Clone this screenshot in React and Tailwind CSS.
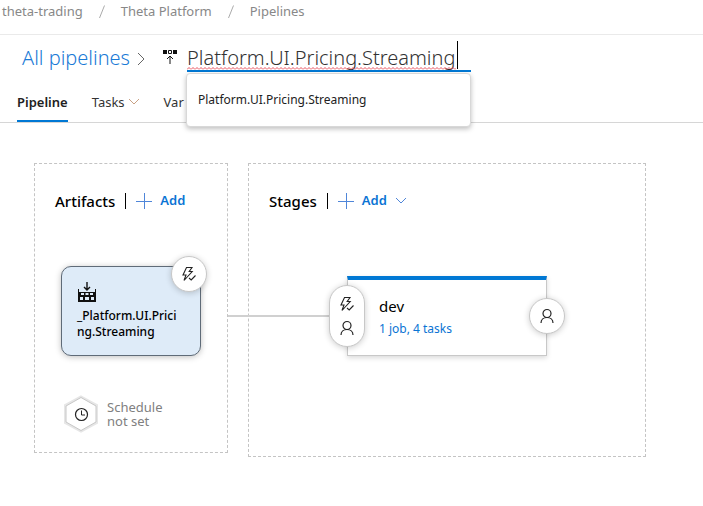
import React from "react";

function PlusIcon() {
  return (
    <svg className="h-4 w-4 shrink-0" viewBox="0 0 16 16" fill="none" stroke="#4f86d9" aria-hidden="true">
      <path d="M8.5 0v16M0 8.5h16" />
    </svg>
  );
}

function ChevronDown({ className }) {
  return (
    <svg className={className} viewBox="0 0 12 8" fill="none" stroke="currentColor" aria-hidden="true">
      <path d="M1 1l5 5 5-5" />
    </svg>
  );
}

function Slash() {
  return (
    <svg className="mx-4 mt-1 h-[14px] w-[6px] shrink-0" viewBox="0 0 6 14" fill="none" stroke="#aaa" aria-hidden="true">
      <path d="M5.500 0.500L0.500 13" />
    </svg>
  );
}

function BoltIcon() {
  return (
    <svg className="h-4 w-4 shrink-0" viewBox="0 0 16 16" fill="none" stroke="#222" strokeWidth="1.1" aria-hidden="true">
      <path d="M5.500 1.500H11L8.200 5.500h3L3 14.500l2-5.500H2z" />
      <path d="M8 12l2.200 2L14.500 9.500" />
    </svg>
  );
}

function PersonIcon() {
  return (
    <svg className="h-4 w-4 shrink-0" viewBox="0 0 16 16" fill="none" stroke="#222" strokeWidth="1.2" aria-hidden="true">
      <circle cx="8" cy="5.5" r="4" />
      <path d="M2 15c0-3.300 2.700-5.500 6-5.500s6 2.200 6 5.500" />
    </svg>
  );
}

function ReleaseIcon() {
  return (
    <svg className="h-[15px] w-[15px] shrink-0" viewBox="0 0 15 15" aria-hidden="true">
      <path d="M0 0h4v4H0zM10 0h4v4h-4z" fill="#111" />
      <path d="M5.500 0.500h3v3h-3zM7 14V6M4 9l3-3 3 3" fill="none" stroke="#111" />
    </svg>
  );
}

function BuildIcon() {
  return (
    <svg className="h-5 w-5" viewBox="0 0 20 20" aria-hidden="true">
      <path d="M10 0v8M7 5l3 3 3-3" fill="none" stroke="#111" strokeWidth="1.4" />
      <path
        fillRule="evenodd"
        fill="#111"
        d="M1 7h1v3h16V7h1v13H1zM4 11v2h3v-2zM8.500 11v2h3v-2zM13 11v2h3v-2zM3 15v3h3v-3zM8 15v3h4v-3zM14 15v3h3v-3z"
      />
    </svg>
  );
}

function ScheduleIcon() {
  return (
    <svg className="h-10 w-9 shrink-0" viewBox="0 0 36 40" fill="none" aria-hidden="true">
      <path d="M18 3l15.500 8.500v17L18 37 2.500 28.500v-17z" fill="#fff" stroke="#e6e6e6" strokeWidth="3" />
      <path d="M18 3.500l15 8.500v16L18 36.500 3 28V12z" fill="#fff" stroke="#c8c8c8" />
      <circle cx="18.500" cy="20.500" r="6" stroke="#222" strokeWidth="1.2" />
      <path d="M18.500 16.500v4.500h3.500" stroke="#222" />
    </svg>
  );
}

const roundButton =
  "absolute flex w-9 flex-col items-center justify-center rounded-full border border-[#c8c8c8] bg-white shadow-[0_1px_6px_rgba(0,0,0,0.2)]";

function PanelHeading({ title, menu }) {
  return (
    <div className="flex h-5 items-center">
      <h2 className="text-[15px] font-medium text-black">{title}</h2>
      <span className="ml-[10px] h-4 w-px bg-black" />
      <button type="button" className="ml-[10px] flex items-center gap-2 text-[13px] font-semibold text-[#0a74d4]">
        <PlusIcon />
        Add
        {menu && <ChevronDown className="h-2 w-3 text-[#4f86d9]" />}
      </button>
    </div>
  );
}

export default function App() {
  return (
    <div className="min-h-screen bg-white font-['Noto_Sans','Open_Sans',sans-serif] text-[#333]">
      <nav aria-label="Breadcrumb" className="flex h-[35px] items-start border-b border-[#eaeaea] pl-[2px] pt-px text-[13px] leading-5 text-[#888]">
        <a href="#project">theta-trading</a>
        <Slash />
        <a href="#platform">Theta Platform</a>
        <Slash />
        <a href="#pipelines">Pipelines</a>
      </nav>

      <header className="border-b border-[#d6d6d6]">
        <div className="flex h-[37px] items-end pl-[22px] text-[20px] font-light">
          <a href="#all" className="leading-7 text-[#1a7ad6]">All pipelines</a>
          <svg className="mb-[6px] ml-[5px] h-[14px] w-3 shrink-0" viewBox="0 0 12 14" fill="none" stroke="#666" aria-hidden="true">
            <path d="M3 1l6 6-6 6" />
          </svg>
          <div className="mb-[7px] ml-4">
            <ReleaseIcon />
          </div>
          <div className="relative ml-[9px] w-[284px]">
            <input
              aria-label="Pipeline name"
              spellCheck={false}
              defaultValue="Platform.UI.Pricing.Streaming"
              className="block h-[31px] w-full border-b-2 border-[#0078d4] bg-transparent p-0 pt-[3px] leading-7 outline-none"
            />
            <svg className="absolute bottom-[2px] left-0 h-[3px] w-[269px]" aria-hidden="true">
              <defs>
                <pattern id="squiggle" width="4" height="3" patternUnits="userSpaceOnUse">
                  <path d="M0 2.500l2-2 2 2" fill="none" stroke="#e8505b" />
                </pattern>
              </defs>
              <rect width="269" height="3" fill="url(#squiggle)" />
            </svg>
            <span className="absolute left-[270px] top-0 h-7 w-px bg-black" />
            <ul className="absolute -left-px top-8 z-10 w-[285px] rounded border border-[#d8d8d8] bg-white px-[11px] py-4 text-[12px] font-normal leading-5 text-[#222] shadow-[0_2px_5px_rgba(0,0,0,0.25)]">
              <li>Platform.UI.Pricing.Streaming</li>
            </ul>
          </div>
        </div>
        <div role="tablist" className="flex h-[50px] items-end pl-[17px] text-[13px] leading-5">
          <button type="button" role="tab" aria-selected="true" className="border-b-2 border-[#0078d4] pb-2 font-semibold text-[#222]">
            Pipeline
          </button>
          <button type="button" role="tab" aria-selected="false" className="ml-6 flex items-center gap-[3px] pb-[10px]">
            Tasks
            <ChevronDown className="h-2 w-3 text-[#c9a184]" />
          </button>
          <button type="button" role="tab" aria-selected="false" className="ml-6 pb-[10px]">
            Var
          </button>
        </div>
      </header>

      <main className="flex items-start gap-5 px-[34px] pt-10">
        <section className="w-[194px] shrink-0 border border-dashed border-[#c4c4c4] px-5 pb-[18px] pt-[27px]">
          <PanelHeading title="Artifacts" />
          <div className="relative ml-[6px] mt-[55px] h-[90px] w-[140px] rounded-[10px] border border-[#5f6b78] bg-[#deebf8] pl-[15px] pr-5 pt-[15px] shadow-[0_1px_6px_rgba(0,0,0,0.25)]">
            <BuildIcon />
            <p className="mt-[6px] break-all text-[12px] font-medium leading-4 text-black">_Platform.UI.Pricing.Streaming</p>
            <button type="button" aria-label="Continuous deployment trigger" className={roundButton + " -right-[7px] -top-[11px] h-9"}>
              <BoltIcon />
            </button>
          </div>
          <div className="ml-2 mt-[38px] flex items-center gap-2">
            <ScheduleIcon />
            <p className="w-16 text-[13px] leading-[14px] text-[#808080]">Schedule not set</p>
          </div>
        </section>

        <section className="relative max-w-[398px] flex-1 border border-dashed border-[#c4c4c4] px-5 pb-[100px] pt-[27px]">
          <span className="absolute -left-[21px] top-[151px] h-[2px] w-[103px] bg-[#d0d0d0]" />
          <PanelHeading title="Stages" menu />
          <div className="relative ml-[78px] mt-[65px] h-20 w-[200px] border border-t-4 border-[#c8c8c8] border-t-[#0078d4] bg-white pl-[31px] pt-[14px] shadow-[0_2px_5px_rgba(0,0,0,0.15)]">
            <h3 className="text-[15px] leading-6 text-black">dev</h3>
            <a href="#tasks" className="mt-px block text-[12px] leading-5 text-[#0a74d4]">1 job, 4 tasks</a>
            <button type="button" aria-label="Pre-deployment conditions" className={roundButton + " -left-[19px] top-[5px] h-[62px] gap-2"}>
              <BoltIcon />
              <PersonIcon />
            </button>
            <button type="button" aria-label="Post-deployment conditions" className={roundButton + " -right-[19px] top-[18px] h-9"}>
              <PersonIcon />
            </button>
          </div>
        </section>
      </main>
    </div>
  );
}
